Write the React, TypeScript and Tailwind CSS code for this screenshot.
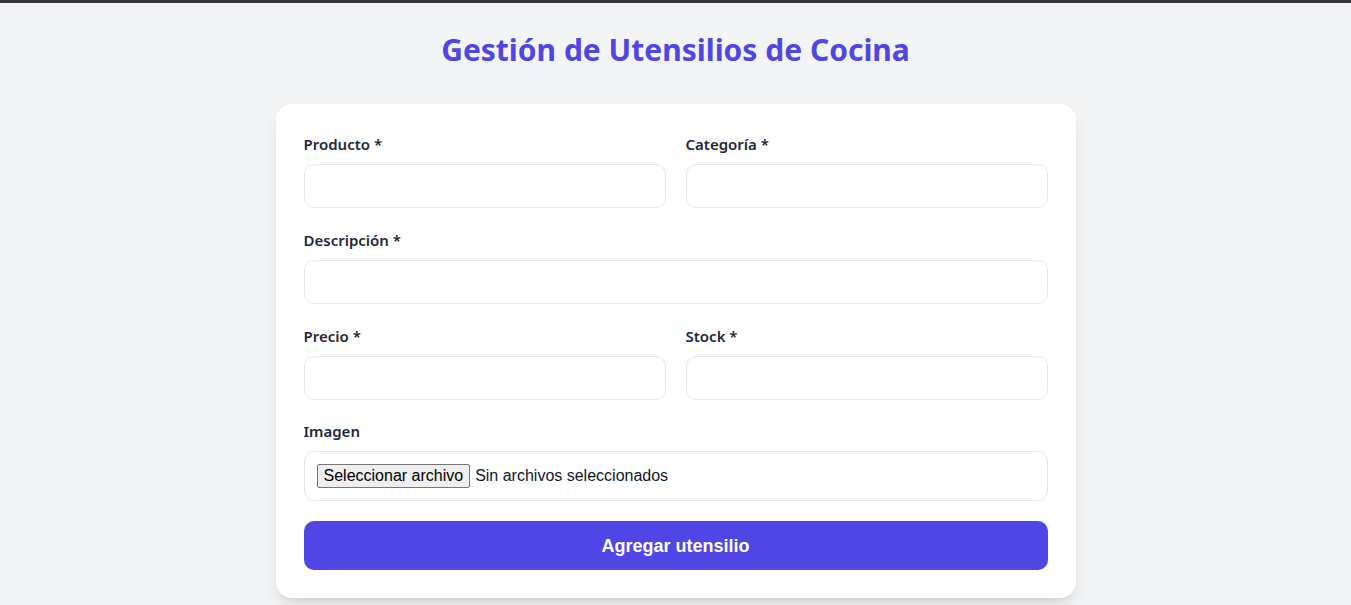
import React from "react";

const labelCls =
  "block mb-2 pt-px leading-[23px] text-[15px] font-semibold text-gray-800";
const inputCls =
  "block w-full h-11 rounded-[10px] border border-gray-200 bg-white px-3 text-base text-gray-800 outline-none focus:border-indigo-400";

const Field: React.FC<{ label: string }> = ({ label }) => (
  <div className="flex flex-col">
    <label className={labelCls}>{label}</label>
    <input type="text" className={inputCls} />
  </div>
);

export default function App() {
  return (
    <div
      className="min-h-screen border-t-[3px] border-[#38383b] bg-gray-100 pt-[27px] pb-8"
      style={{ fontFamily: '"Noto Sans", "Open Sans", sans-serif' }}
    >
      <h1 className="mb-[34px] text-center text-3xl leading-10 font-bold text-[#4f46e5]">
        Gestión de Utensilios de Cocina
      </h1>

      <form
        className="mx-auto flex w-[800px] flex-col gap-[19.8px] rounded-2xl bg-white p-7 shadow-lg"
        onSubmit={(e) => e.preventDefault()}
      >
        <div className="grid grid-cols-2 gap-5">
          <Field label="Producto *" />
          <Field label="Categoría *" />
        </div>
        <Field label="Descripción *" />
        <div className="grid grid-cols-2 gap-5">
          <Field label="Precio *" />
          <Field label="Stock *" />
        </div>
        <div className="flex flex-col">
          <label className={labelCls}>Imagen</label>
          <div className="flex items-center gap-[5px] rounded-[10px] border border-gray-200 p-3 font-['Liberation_Sans',Arial,sans-serif] text-base leading-[22px] text-gray-900">
            <span className="rounded-[2px] border border-[#767676] bg-[#efefef] px-[6px] leading-[22px] text-black">
              Seleccionar archivo
            </span>
            <span>Sin archivos seleccionados</span>
          </div>
        </div>
        <button
          type="submit"
          className="h-[49px] w-full rounded-[10px] bg-[#4f46e5] font-['Liberation_Sans',Arial,sans-serif] text-lg font-bold text-white"
        >
          Agregar utensilio
        </button>
      </form>
    </div>
  );
}
